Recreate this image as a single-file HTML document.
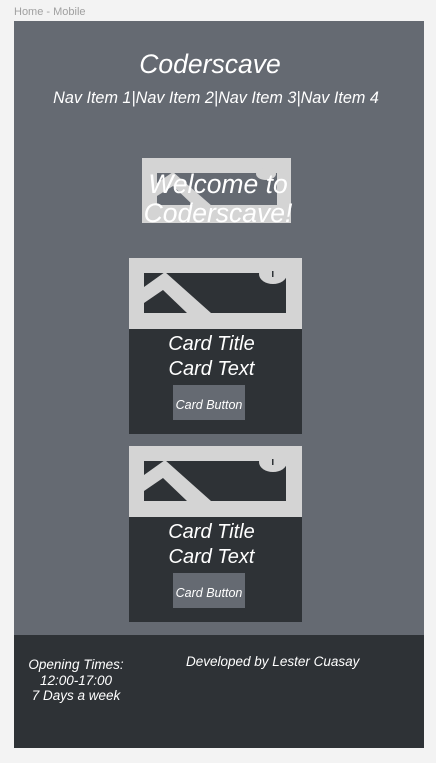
<!DOCTYPE html>
<html><head><meta charset="utf-8"><style>
*{margin:0;padding:0;box-sizing:border-box}
body{width:436px;height:763px;background:#f3f3f3;position:relative;overflow:hidden;font-family:"Liberation Sans",sans-serif;font-style:italic;color:#fff}
.lbl{position:absolute;left:14px;top:6px;font-size:11px;color:#a0a0a0;font-style:normal}
.frame{position:absolute;left:14px;top:21px;width:410px;height:727px;background:#656a72}
.abs{position:absolute}
.c{text-align:center;width:100%}
.card{position:absolute;left:129px;width:173px;height:176px;background:#2e3236}
.btn{position:absolute;left:44px;top:127px;width:72px;height:35px;background:#656a72;font-size:12.5px;line-height:41px;text-align:center;white-space:nowrap}
.footer{position:absolute;left:14px;top:635px;width:410px;height:113px;background:#2e3236}
</style></head><body>
<div class="lbl">Home - Mobile</div>
<div class="frame"></div>
<div class="abs c" style="top:49px;font-size:26.5px;left:0;width:420px">Coderscave</div>
<div class="abs c" style="top:89px;font-size:16.2px;left:0;width:432px">Nav Item 1|Nav Item 2|Nav Item 3|Nav Item 4</div>

<svg class="abs" style="left:142px;top:158px" width="149" height="68" viewBox="0 0 149 68">
<rect width="149" height="65" fill="#d4d4d4"/>
<rect x="15" y="15" width="120" height="32" fill="#656a72"/>
<polygon points="15,25 31,14 70,48 52,48 31,28 15,38" fill="#d4d4d4"/>
<ellipse cx="124" cy="16" rx="10" ry="6" fill="#d4d4d4"/>
</svg>
<div class="abs c" style="top:170px;font-size:26.5px;line-height:29px;left:0;width:436px">Welcome to<br>Coderscave!</div>

<div class="card" style="top:258px">
<svg class="abs" style="left:0;top:0" width="173" height="71" viewBox="0 0 173 71">
<rect width="173" height="71" fill="#d4d4d4"/>
<rect x="15" y="15" width="142" height="40" fill="#2e3236"/>
<polygon points="15,29 36,14 82,55 58,55 34,32 15,45" fill="#d4d4d4"/>
<ellipse cx="144" cy="16" rx="14" ry="10" fill="#d4d4d4"/>
<rect x="143" y="13" width="1.5" height="6" fill="#2e3236"/>
</svg>
<div class="abs c" style="top:74px;font-size:20px;line-height:25px;left:-4px">Card Title<br>Card Text</div>
<div class="btn">Card Button</div>
</div>

<div class="card" style="top:446px">
<svg class="abs" style="left:0;top:0" width="173" height="71" viewBox="0 0 173 71">
<rect width="173" height="71" fill="#d4d4d4"/>
<rect x="15" y="15" width="142" height="40" fill="#2e3236"/>
<polygon points="15,29 36,14 82,55 58,55 34,32 15,45" fill="#d4d4d4"/>
<ellipse cx="144" cy="16" rx="14" ry="10" fill="#d4d4d4"/>
<rect x="143" y="13" width="1.5" height="6" fill="#2e3236"/>
</svg>
<div class="abs c" style="top:74px;font-size:20px;line-height:25px;left:-4px">Card Title<br>Card Text</div>
<div class="btn">Card Button</div>
</div>

<div class="footer">
<div class="abs" style="left:0;top:22px;width:124px;text-align:center;font-size:13.5px;line-height:15.5px">Opening Times:<br>12:00-17:00<br>7 Days a week</div>
<div class="abs" style="left:172px;top:19px;font-size:13.5px">Developed by Lester Cuasay</div>
</div>
</body></html>
